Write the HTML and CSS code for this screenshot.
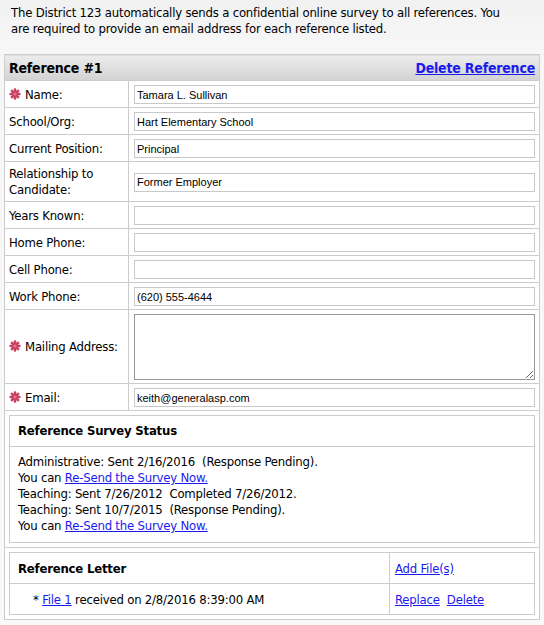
FILE: index.html
```html
<!DOCTYPE html>
<html>
<head>
<meta charset="utf-8">
<link rel="stylesheet" href="styles.css">
</head>
<body>
<div class="page">
  <p class="intro">The District 123 automatically sends a confidential online survey to all references. You are required to provide an email address for each reference listed.</p>
  <table class="ref">
    <tr class="head">
      <th class="head-title">Reference #1</th>
      <th class="head-action"><a href="#">Delete Reference</a></th>
    </tr>
    <tr>
      <td class="lbl"><span class="req"><svg viewBox="0 0 12 12" width="12" height="12"><g stroke="#c9415f" stroke-width="2.6" stroke-linecap="round"><line x1="6" y1="1.6" x2="6" y2="10.4"/><line x1="1.6" y1="6" x2="10.4" y2="6"/><line x1="2.9" y1="2.9" x2="9.1" y2="9.1"/><line x1="9.1" y1="2.9" x2="2.9" y2="9.1"/></g><circle cx="6" cy="6" r="1.6" fill="#e07890"/></svg></span>Name:</td>
      <td class="fld"><input class="inp" type="text" value="Tamara L. Sullivan"></td>
    </tr>
    <tr>
      <td class="lbl">School/Org:</td>
      <td class="fld"><input class="inp" type="text" value="Hart Elementary School"></td>
    </tr>
    <tr>
      <td class="lbl">Current Position:</td>
      <td class="fld"><input class="inp" type="text" value="Principal"></td>
    </tr>
    <tr>
      <td class="lbl">Relationship to Candidate:</td>
      <td class="fld"><input class="inp" type="text" value="Former Employer"></td>
    </tr>
    <tr>
      <td class="lbl">Years Known:</td>
      <td class="fld"><input class="inp" type="text" value=""></td>
    </tr>
    <tr>
      <td class="lbl">Home Phone:</td>
      <td class="fld"><input class="inp" type="text" value=""></td>
    </tr>
    <tr>
      <td class="lbl">Cell Phone:</td>
      <td class="fld"><input class="inp" type="text" value=""></td>
    </tr>
    <tr>
      <td class="lbl">Work Phone:</td>
      <td class="fld"><input class="inp" type="text" value="(620) 555-4644"></td>
    </tr>
    <tr>
      <td class="lbl"><span class="req"><svg viewBox="0 0 12 12" width="12" height="12"><g stroke="#c9415f" stroke-width="2.6" stroke-linecap="round"><line x1="6" y1="1.6" x2="6" y2="10.4"/><line x1="1.6" y1="6" x2="10.4" y2="6"/><line x1="2.9" y1="2.9" x2="9.1" y2="9.1"/><line x1="9.1" y1="2.9" x2="2.9" y2="9.1"/></g><circle cx="6" cy="6" r="1.6" fill="#e07890"/></svg></span>Mailing Address:</td>
      <td class="fld"><textarea class="area"></textarea></td>
    </tr>
    <tr>
      <td class="lbl"><span class="req"><svg viewBox="0 0 12 12" width="12" height="12"><g stroke="#c9415f" stroke-width="2.6" stroke-linecap="round"><line x1="6" y1="1.6" x2="6" y2="10.4"/><line x1="1.6" y1="6" x2="10.4" y2="6"/><line x1="2.9" y1="2.9" x2="9.1" y2="9.1"/><line x1="9.1" y1="2.9" x2="2.9" y2="9.1"/></g><circle cx="6" cy="6" r="1.6" fill="#e07890"/></svg></span>Email:</td>
      <td class="fld"><input class="inp" type="text" value="keith@generalasp.com"></td>
    </tr>
    <tr>
      <td class="wrap" colspan="2">
        <div class="box">
          <div class="box-head">Reference Survey Status</div>
          <div class="box-body">
            Administrative: Sent 2/16/2016&nbsp; (Response Pending).<br>
            You can <a href="#">Re-Send the Survey Now.</a><br>
            Teaching: Sent 7/26/2012&nbsp; Completed 7/26/2012.<br>
            Teaching: Sent 10/7/2015&nbsp; (Response Pending).<br>
            You can <a href="#">Re-Send the Survey Now.</a>
          </div>
        </div>
      </td>
    </tr>
    <tr>
      <td class="wrap" colspan="2">
        <table class="letter">
          <tr>
            <td class="l-title">Reference Letter</td>
            <td class="l-act"><a href="#">Add File(s)</a></td>
          </tr>
          <tr>
            <td class="l-file">* <a href="#">File 1</a> received on 2/8/2016 8:39:00 AM</td>
            <td class="l-act"><a href="#">Replace</a>&nbsp; <a href="#">Delete</a></td>
          </tr>
        </table>
      </td>
    </tr>
  </table>
</div>
</body>
</html>
```

FILE: styles.css
```css
html, body {
  margin: 0;
  padding: 0;
  background: #ffffff;
}
body {
  font-family: "DejaVu Sans Condensed", "DejaVu Sans", Verdana, sans-serif;
  font-stretch: condensed;
  font-size: 13px;
  letter-spacing: -0.2px;
  color: #000;
}
.page {
  padding: 4px 4px 0 4px;
  background: linear-gradient(#f1f1f1 0px, #f6f6f6 40px, #f9f9f9 600px);
  min-height: 621px;
}
.intro {
  width: 500px;
  margin: 0 0 0 7px;
  padding: 1px 0 0 0;
  line-height: 16px;
  height: 49px;
}
a {
  color: #1a1aee;
  text-decoration: underline;
}
.ref {
  width: 536px;
  border-collapse: collapse;
  border: 1px solid #cccccc;
  background: #ffffff;
}
.ref td, .ref th {
  border: 1px solid #cccccc;
}
.head th {
  height: 25px;
  padding: 0 4px;
  background: linear-gradient(#ececec, #d3d3d3);
  font-weight: bold;
  font-size: 14px;
  line-height: 16px;
}
.head-title {
  text-align: left;
  border-right: none !important;
}
.head-action {
  text-align: right;
  border-left: none !important;
}
.lbl {
  width: 115px;
  padding: 4px 4px 3px 4px;
  line-height: 16px;
  vertical-align: middle;
}
.req {
  display: inline-block;
  width: 16px;
  vertical-align: -1px;
}
.req svg {
  display: block;
}
.fld {
  padding: 4px 4px 3px 5px;
  vertical-align: middle;
}
.inp {
  display: block;
  box-sizing: border-box;
  width: 401px;
  height: 19px;
  margin: 0;
  padding: 0 2px;
  border: 1px solid #c8c8c8;
  font-family: "Liberation Sans", Arial, sans-serif;
  font-size: 11px;
  font-stretch: normal;
  letter-spacing: 0;
  color: #000;
  background: #fff;
}
.area {
  display: block;
  box-sizing: border-box;
  width: 401px;
  height: 66px;
  margin: 0;
  padding: 2px;
  border: 1px solid #999;
  font-family: "Liberation Sans", Arial, sans-serif;
  font-size: 11px;
  resize: both;
}
.wrap {
  padding: 4px;
}
.box {
  border: 1px solid #cccccc;
}
.box-head {
  height: 30px;
  line-height: 30px;
  padding-left: 8px;
  font-weight: bold;
  border-bottom: 1px solid #cccccc;
}
.box-body {
  padding: 7px 8px 8px 8px;
  line-height: 16px;
}
.letter {
  width: 100%;
  border-collapse: collapse;
  border: 1px solid #cccccc;
}
.letter td {
  border: 1px solid #cccccc;
  height: 30px;
  padding: 0 0 0 5px;
  vertical-align: middle;
}
.l-title {
  font-weight: bold;
  padding-left: 8px !important;
}
.l-file {
  padding-left: 23px !important;
}
.l-act {
  width: 139px;
}
```
